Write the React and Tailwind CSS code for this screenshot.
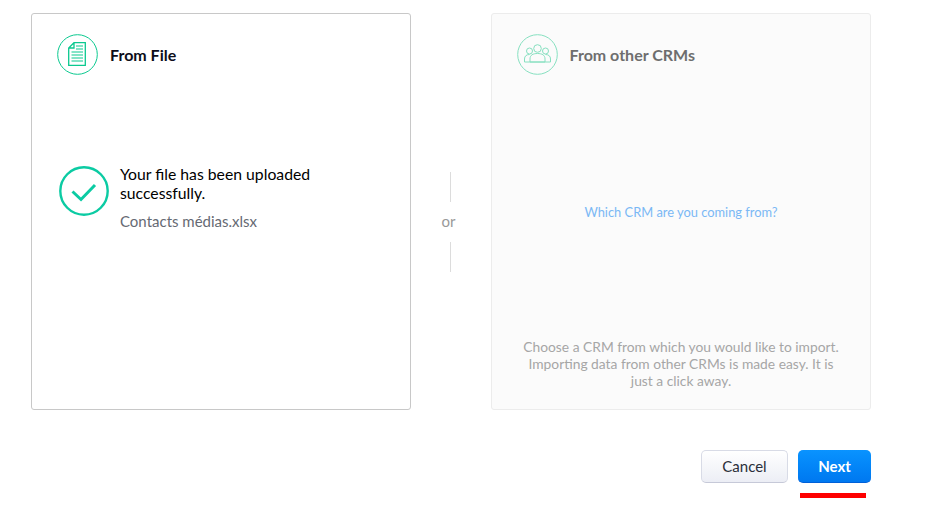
export default function App() {
  return (
    <div className="w-[928px] h-[505px] bg-white relative overflow-hidden font-['Lato','Liberation_Sans',sans-serif]">
      <div className="flex pt-[13px] pl-[31px]">
        <div className="w-[380px] h-[397px] border border-[#c8c8c8] rounded-[3px] bg-white flex flex-col shrink-0">
          <div className="flex items-center gap-[12px] pl-[25px] pt-[20px]">
            <svg width="41" height="41" viewBox="0 0 41 41" fill="none" stroke="#0ac98f" strokeWidth="1.3">
              <circle cx="20.5" cy="20.5" r="19.8" strokeWidth="1" />
              <path d="M17 8.7H28.3V31.3H11.7V14Z M17 8.7V14H11.7" />
              <path d="M19 12H26 M19 15H26 M14.5 18H26 M14.5 21H26 M14.5 24H26 M14.5 27H26" strokeWidth="1.2" />
            </svg>
            <span className="text-[16px] font-bold text-[#0d0d1a]">From File</span>
          </div>
          <div className="flex gap-[11px] pl-[27px] mt-[84px]">
            <svg width="50" height="50" viewBox="0 0 50 50" fill="none" stroke="#0bcba3" className="mt-[7px] shrink-0">
              <circle cx="25" cy="25" r="23.7" strokeWidth="2.4" />
              <path d="M13.5 25.5L22 33.5L36 19" strokeWidth="3" />
            </svg>
            <div className="flex flex-col mt-[5px]">
              <p className="text-[15.75px] leading-[19px] text-black w-[220px]">Your file has been uploaded successfully.</p>
              <p className="text-[15px] leading-[20px] text-[#666a73] mt-[9px]">Contacts médias.xlsx</p>
            </div>
          </div>
        </div>
        <div className="w-[78px] shrink-0 flex flex-col items-center pt-[159px]">
          <div className="w-px h-[30px] bg-[#dcdcdc]" />
          <span className="text-[15px] leading-[20px] text-[#999] mt-[9px] mb-[11px] -ml-[3px]">or</span>
          <div className="w-px h-[30px] bg-[#dcdcdc]" />
        </div>
        <div className="w-[380px] ml-[2px] h-[397px] border border-[#ececec] rounded-[3px] bg-[#fbfbfb] flex flex-col items-center shrink-0">
          <div className="self-start flex items-center gap-[12px] pl-[25px] pt-[20px]">
            <svg width="41" height="41" viewBox="0 0 41 41" fill="none" stroke="#86e0c0" strokeWidth="1">
              <circle cx="20.5" cy="20.5" r="19.8" />
              <circle cx="20.5" cy="14.5" r="3.8" />
              <circle cx="12.5" cy="17" r="3" />
              <circle cx="28.5" cy="17" r="3" />
              <path d="M13 28V25C13 21 16 19.5 20.5 19.5C25 19.5 28 21 28 25V28Z" />
              <path d="M7.5 28V25C7.5 22 9.5 20.5 12.5 20.5 M33.5 28V25C33.5 22 31.5 20.5 28.5 20.5 M7.5 28H33.5" />
            </svg>
            <span className="text-[16px] font-bold text-[#6e6e6e] -ml-[0.5px]">From other CRMs</span>
          </div>
          <p className="text-[12.87px] leading-[20px] text-[#7ab8f5] mt-[127px]">Which CRM are you coming from?</p>
          <p className="text-[13.8px] leading-[17px] text-[#a6a6a6] text-center w-[320px] mt-[116px]">Choose a CRM from which you would like to import. Importing data from other CRMs is made easy. It is just a click away.</p>
        </div>
      </div>
      <div className="flex justify-end gap-[10px] w-[871px] mt-[40px]">
        <button className="w-[87px] h-[33px] rounded-[5px] border border-[#d8dbe6] border-b-[#c6c9d8] bg-gradient-to-b from-white to-[#eceef5] text-[15px] text-[#2a2f3a]">Cancel</button>
        <div className="flex flex-col">
          <button className="w-[73px] h-[33px] rounded-[5px] bg-gradient-to-b from-[#0a93ff] to-[#0078f0] border-b border-b-[#0060d8] text-[15px] font-bold text-white">Next</button>
          <div className="w-[66px] h-[5px] bg-[#fe0000] mt-[10px] ml-[2px]" />
        </div>
      </div>
    </div>
  );
}
